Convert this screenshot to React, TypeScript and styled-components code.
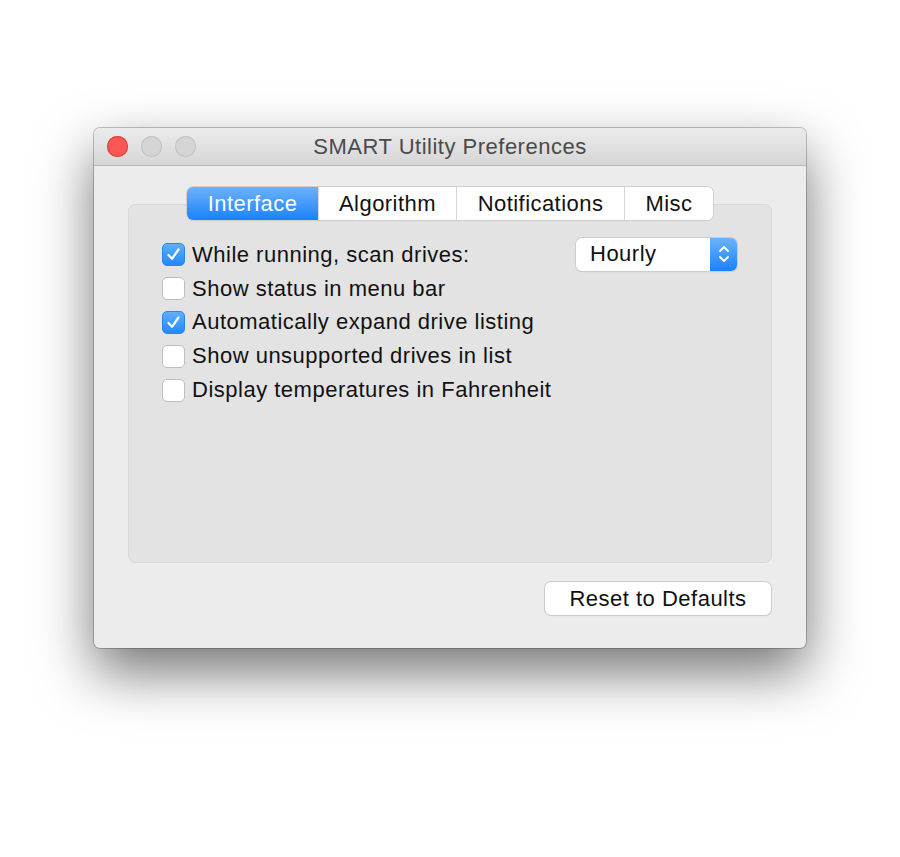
import React from "react";
import styled, { createGlobalStyle } from "styled-components";

const Global = createGlobalStyle`
  html, body { margin: 0; padding: 0; background: #ffffff; }
  body { font-family: "Liberation Sans", Arial, sans-serif; }
`;

const Page = styled.div`
  width: 900px;
  height: 857px;
  padding: 128px 0 0 94px;
  box-sizing: border-box;
  background: #ffffff;
`;

const Window = styled.div`
  width: 712px;
  height: 520px;
  border-radius: 6px;
  background: #ececec;
  box-shadow: 0 24px 55px rgba(0, 0, 0, 0.55), 0 0 0 1px rgba(0, 0, 0, 0.22);
  display: flex;
  flex-direction: column;
  overflow: hidden;
`;

const TitleBar = styled.div`
  height: 37px;
  flex: 0 0 37px;
  background: linear-gradient(#ececec, #d6d6d6);
  border-bottom: 1px solid #b8b8b8;
  display: flex;
  align-items: center;
  position: relative;
  padding-left: 13px;
  gap: 13px;
`;

const Light = styled.div<{ $c: string; $b: string }>`
  width: 21px;
  height: 21px;
  border-radius: 50%;
  background: ${(p) => p.$c};
  box-shadow: inset 0 0 0 1px ${(p) => p.$b};
`;

const Title = styled.div`
  position: absolute;
  left: 0;
  right: 0;
  top: 0;
  bottom: 0;
  display: flex;
  align-items: center;
  justify-content: center;
  font-size: 22px;
  letter-spacing: 0.5px;
  color: #4a4a4a;
  pointer-events: none;
`;

const Body = styled.div`
  flex: 1;
  display: flex;
  flex-direction: column;
  padding: 21px 34px 0 34px;
`;

const TabArea = styled.div`
  position: relative;
  display: flex;
  flex-direction: column;
  align-items: center;
`;

const TabBox = styled.div`
  margin-top: -16px;
  height: 359px;
  align-self: stretch;
  background: #e3e3e3;
  border: 1px solid #d9d9d9;
  border-radius: 7px;
  box-sizing: border-box;
  padding: 33px 32px 0 33px;
  display: flex;
  flex-direction: column;
`;

const Tabs = styled.div`
  position: relative;
  z-index: 1;
  display: flex;
  height: 33px;
  border-radius: 6px;
  background: #ffffff;
  box-shadow: 0 0 0 1px #cfcfcf, 0 1px 1px rgba(0, 0, 0, 0.12);
  overflow: hidden;
`;

const Tab = styled.div<{ $w: number; $active?: boolean }>`
  width: ${(p) => p.$w}px;
  flex: 0 0 ${(p) => p.$w}px;
  box-sizing: border-box;
  display: flex;
  align-items: center;
  justify-content: center;
  font-size: 22px;
  letter-spacing: 0.45px;
  color: ${(p) => (p.$active ? "#ffffff" : "#111111")};
  background: ${(p) =>
    p.$active ? "linear-gradient(#6cb3fa, #1a82fb)" : "#ffffff"};
  & + & {
    border-left: 1px solid #d8d8d8;
  }
`;

const Row = styled.div`
  display: flex;
  align-items: center;
  height: 33.8px;
`;

const Box = styled.div<{ $on?: boolean }>`
  width: 23px;
  height: 23px;
  box-sizing: border-box;
  border-radius: 5px;
  margin-right: 7px;
  display: flex;
  align-items: center;
  justify-content: center;
  background: ${(p) => (p.$on ? "linear-gradient(#5fb0fb, #2389fb)" : "#ffffff")};
  border: 1px solid ${(p) => (p.$on ? "#2a86ee" : "#bdbdbd")};
`;

const Label = styled.span`
  font-size: 22px;
  letter-spacing: 0.5px;
  color: #111111;
  flex: 1;
`;

const Popup = styled.div`
  width: 161px;
  height: 33px;
  margin-top: -1px;
  margin-right: 2px;
  border-radius: 6px;
  background: #ffffff;
  box-shadow: 0 0 0 1px #cdcdcd, 0 1px 1px rgba(0, 0, 0, 0.12);
  display: flex;
  overflow: hidden;
`;

const PopupText = styled.div`
  flex: 1;
  display: flex;
  align-items: center;
  padding-left: 14px;
  font-size: 22px;
  letter-spacing: 0.5px;
  color: #111111;
`;

const PopupArrows = styled.div`
  width: 27px;
  background: linear-gradient(#6cb3fa, #1a82fb);
  display: flex;
  align-items: center;
  justify-content: center;
`;

const Footer = styled.div`
  display: flex;
  justify-content: flex-end;
  padding-top: 19px;
  padding-right: 1px;
`;

const Button = styled.div`
  width: 226px;
  height: 33px;
  border-radius: 6px;
  background: #ffffff;
  box-shadow: 0 0 0 1px #cdcdcd, 0 1px 1px rgba(0, 0, 0, 0.12);
  display: flex;
  align-items: center;
  justify-content: center;
  font-size: 22px;
  letter-spacing: 0.5px;
  color: #111111;
`;

const Check = () => (
  <svg width="15" height="15" viewBox="0 0 15 15">
    <path d="M2.5 8 L6 11.8 L12.5 2.5" fill="none" stroke="#fff" strokeWidth="2.2" strokeLinecap="round" strokeLinejoin="round" />
  </svg>
);

const items: { label: string; on: boolean; popup?: boolean }[] = [
  { label: "While running, scan drives:", on: true, popup: true },
  { label: "Show status in menu bar", on: false },
  { label: "Automatically expand drive listing", on: true },
  { label: "Show unsupported drives in list", on: false },
  { label: "Display temperatures in Fahrenheit", on: false },
];

export default function App() {
  return (
    <Page>
      <Global />
      <Window>
        <TitleBar>
          <Light $c="#fc5753" $b="#de3f3a" />
          <Light $c="#d5d5d5" $b="#c2c2c2" />
          <Light $c="#d5d5d5" $b="#c2c2c2" />
          <Title>SMART Utility Preferences</Title>
        </TitleBar>
        <Body>
          <TabArea>
            <Tabs>
              <Tab $w={131} $active>Interface</Tab>
              <Tab $w={138}>Algorithm</Tab>
              <Tab $w={168}>Notifications</Tab>
              <Tab $w={89}>Misc</Tab>
            </Tabs>
            <TabBox>
              {items.map((it) => (
                <Row key={it.label}>
                  <Box $on={it.on}>{it.on && <Check />}</Box>
                  <Label>{it.label}</Label>
                  {it.popup && (
                    <Popup>
                      <PopupText>Hourly</PopupText>
                      <PopupArrows>
                        <svg width="14" height="22" viewBox="0 0 14 22">
                          <path d="M3 8 L7 4 L11 8 M3 14 L7 18 L11 14" fill="none" stroke="#fff" strokeWidth="1.8" strokeLinecap="round" strokeLinejoin="round" />
                        </svg>
                      </PopupArrows>
                    </Popup>
                  )}
                </Row>
              ))}
            </TabBox>
          </TabArea>
          <Footer>
            <Button>Reset to Defaults</Button>
          </Footer>
        </Body>
      </Window>
    </Page>
  );
}
